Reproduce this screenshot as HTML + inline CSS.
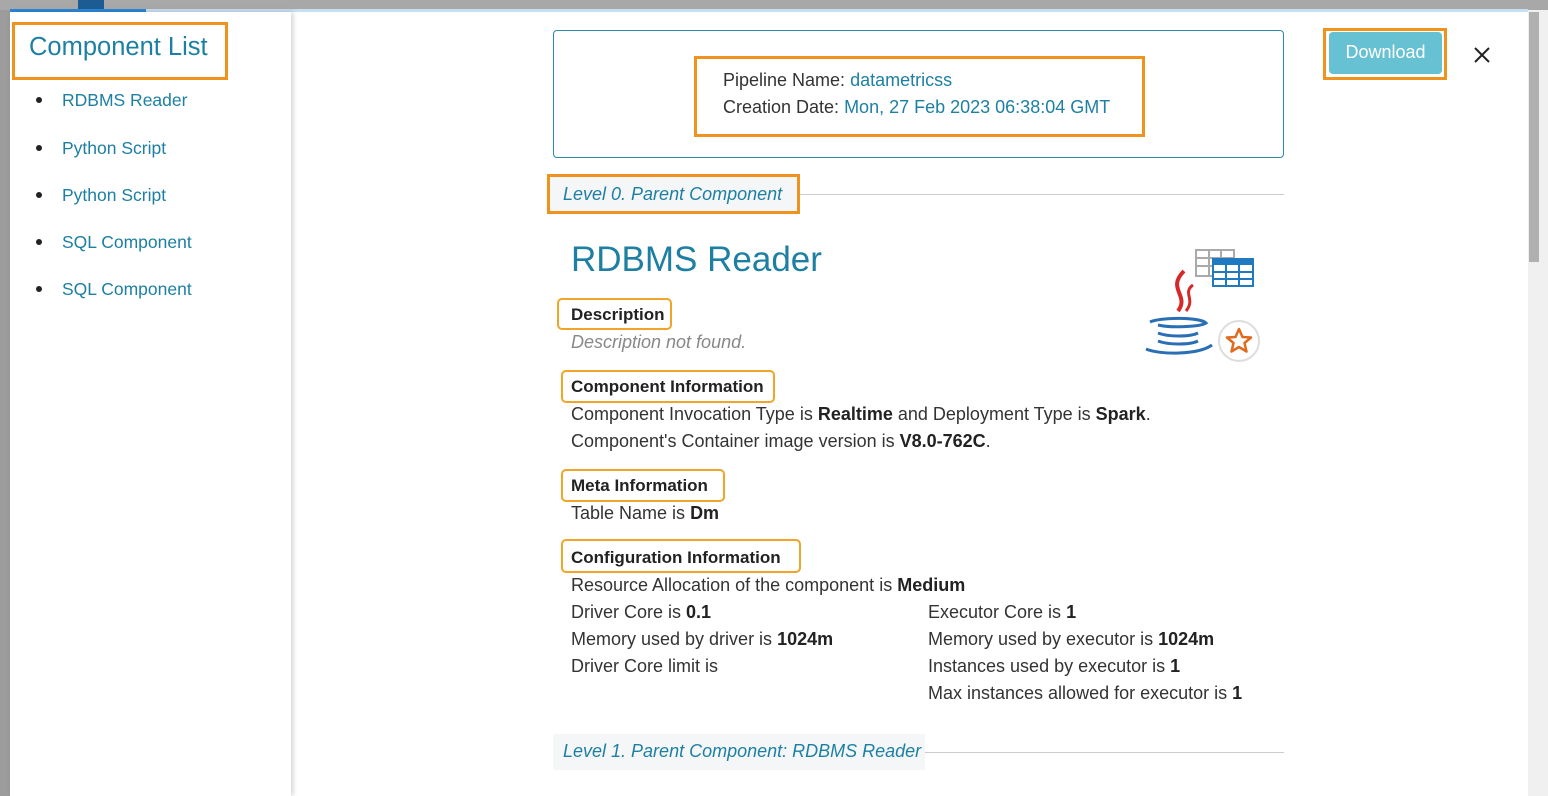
<!DOCTYPE html>
<html><head><meta charset="utf-8"><style>
*{margin:0;padding:0;box-sizing:border-box}
body{width:1548px;height:796px;overflow:hidden;background:#9c9c9c;font-family:"Liberation Sans",sans-serif;color:#333;position:relative}
.a{position:absolute;white-space:nowrap}
.t{color:#1d80a3}
.ob{position:absolute;border:3px solid #f0921e}
.yb{position:absolute;border:2px solid #f0a52a;border-radius:5px}
.l{font-size:18px;line-height:20px}
.s{font-size:17.5px;line-height:20px}
b{font-weight:bold;color:#222}
.h{font-size:17px;font-weight:bold;color:#222}
</style></head><body>
<div class="a" style="left:0;top:0;width:1548px;height:10px;background:#a8a8a8"></div>
<div class="a" style="left:78px;top:0;width:26px;height:10px;background:#1d5c93"></div>
<div class="a" style="left:10px;top:9px;width:1518px;height:4px;background:#c7dff3"></div>
<div class="a" style="left:10px;top:9px;width:136px;height:4px;background:#2a88d8"></div>
<div class="a" style="left:10px;top:12px;width:1518px;height:784px;background:#fff"></div>
<div class="a" style="left:10px;top:12px;width:281px;height:784px;background:#fff;box-shadow:2px 0 5px rgba(0,0,0,.18)"></div>
<div class="a" style="left:1528px;top:10px;width:20px;height:786px;background:#f0f0f0"></div>
<div class="a" style="left:1529px;top:12px;width:10px;height:250px;background:#b0b0b0"></div>

<div class="ob" style="left:12px;top:22px;width:216px;height:58px"></div>
<div class="a t" style="left:29px;top:33px;font-size:25.5px">Component List</div>
<div class="a t s" style="left:62px;top:90px">RDBMS Reader</div>
<div class="a t s" style="left:62px;top:138px">Python Script</div>
<div class="a t s" style="left:62px;top:185px">Python Script</div>
<div class="a t s" style="left:62px;top:232px">SQL Component</div>
<div class="a t s" style="left:62px;top:279px">SQL Component</div>
<div class="a" style="left:36px;top:97px;width:6px;height:6px;border-radius:3px;background:#222"></div>
<div class="a" style="left:36px;top:145px;width:6px;height:6px;border-radius:3px;background:#222"></div>
<div class="a" style="left:36px;top:192px;width:6px;height:6px;border-radius:3px;background:#222"></div>
<div class="a" style="left:36px;top:239px;width:6px;height:6px;border-radius:3px;background:#222"></div>
<div class="a" style="left:36px;top:286px;width:6px;height:6px;border-radius:3px;background:#222"></div>

<div class="a" style="left:553px;top:30px;width:731px;height:128px;border:1px solid #2a8aa8;border-radius:4px"></div>
<div class="ob" style="left:694px;top:56px;width:451px;height:81px"></div>
<div class="a l" style="left:723px;top:70px">Pipeline Name: <span class="t">datametricss</span></div>
<div class="a l" style="left:723px;top:97px">Creation Date: <span class="t">Mon, 27 Feb 2023 06:38:04 GMT</span></div>

<div class="ob" style="left:1323px;top:28px;width:124px;height:52px"></div>
<div class="a" style="left:1329px;top:32px;width:113px;height:42px;background:#66c1d2;border-radius:4px;color:#fff;font-size:18px;text-align:center;line-height:40px">Download</div>
<svg class="a" style="left:1473px;top:46px" width="18" height="18" viewBox="0 0 18 18"><path d="M2 2L16 16M16 2L2 16" stroke="#222" stroke-width="2"/></svg>

<div class="a" style="left:550px;top:177px;width:248px;height:34px;background:#f5f6f7"></div>
<div class="ob" style="left:547px;top:174px;width:253px;height:40px"></div>
<div class="a t l" style="left:563px;top:184px;font-style:italic">Level 0. Parent Component</div>
<div class="a" style="left:800px;top:194px;width:484px;height:1px;background:#ccc"></div>

<div class="a t" style="left:571px;top:240px;font-size:35px">RDBMS Reader</div>

<svg class="a" style="left:1140px;top:245px" width="125" height="120" viewBox="0 0 125 120">
<rect x="56" y="5" width="38" height="26" fill="none" stroke="#aaa" stroke-width="2"/>
<path d="M56 13H94M56 21H94M69 5V31M81 5V31" stroke="#aaa" stroke-width="2"/>
<rect x="73" y="14" width="40" height="27" fill="#fff" stroke="#1f7ac2" stroke-width="2"/>
<rect x="73" y="14" width="40" height="6" fill="#1f7ac2"/>
<path d="M73 27H113M73 34H113M86 14V41M99 14V41" stroke="#1f7ac2" stroke-width="2"/>
<path d="M44 26C26 44 50 50 38 66" stroke="#d42a2a" stroke-width="4" fill="none"/>
<path d="M53 40C42 48 56 54 46 66" stroke="#d42a2a" stroke-width="3" fill="none"/>
<path d="M10 77C20 72 60 72 66 78C60 82 30 83 18 80" stroke="#2a6fb5" stroke-width="3" fill="none"/>
<path d="M18 88C28 92 50 92 58 88" stroke="#2a6fb5" stroke-width="3" fill="none"/>
<path d="M18 96C28 100 50 100 58 96" stroke="#2a6fb5" stroke-width="3" fill="none"/>
<path d="M6 104C20 110 58 110 72 100" stroke="#2a6fb5" stroke-width="3" fill="none"/>
<circle cx="99" cy="96" r="20" fill="#fff" stroke="#ddd" stroke-width="2"/>
<path d="M99 84L102.5 92L111 92.5L104.5 98L106.5 106.5L99 102L91.5 106.5L93.5 98L87 92.5L95.5 92Z" fill="none" stroke="#e06a1e" stroke-width="2.5" stroke-linejoin="round"/>
</svg>

<div class="yb" style="left:557px;top:298px;width:115px;height:32px"></div>
<div class="a h" style="left:571px;top:305px">Description</div>
<div class="a l" style="left:571px;top:332px;font-style:italic;color:#888">Description not found.</div>

<div class="yb" style="left:561px;top:370px;width:214px;height:33px"></div>
<div class="a h" style="left:571px;top:377px">Component Information</div>
<div class="a l" style="left:571px;top:404px">Component Invocation Type is <b>Realtime</b> and Deployment Type is <b>Spark</b>.</div>
<div class="a l" style="left:571px;top:431px">Component's Container image version is <b>V8.0-762C</b>.</div>

<div class="yb" style="left:561px;top:469px;width:164px;height:33px"></div>
<div class="a h" style="left:571px;top:476px">Meta Information</div>
<div class="a l" style="left:571px;top:503px">Table Name is <b>Dm</b></div>

<div class="yb" style="left:561px;top:539px;width:240px;height:34px"></div>
<div class="a h" style="left:571px;top:548px">Configuration Information</div>
<div class="a l" style="left:571px;top:575px">Resource Allocation of the component is <b>Medium</b></div>
<div class="a l" style="left:571px;top:602px">Driver Core is <b>0.1</b></div>
<div class="a l" style="left:571px;top:629px">Memory used by driver is <b>1024m</b></div>
<div class="a l" style="left:571px;top:656px">Driver Core limit is</div>
<div class="a l" style="left:928px;top:602px">Executor Core is <b>1</b></div>
<div class="a l" style="left:928px;top:629px">Memory used by executor is <b>1024m</b></div>
<div class="a l" style="left:928px;top:656px">Instances used by executor is <b>1</b></div>
<div class="a l" style="left:928px;top:683px">Max instances allowed for executor is <b>1</b></div>

<div class="a" style="left:553px;top:734px;width:372px;height:36px;background:#f5f6f7"></div>
<div class="a t l" style="left:563px;top:741px;font-style:italic">Level 1. Parent Component: RDBMS Reader</div>
<div class="a" style="left:925px;top:752px;width:359px;height:1px;background:#ccc"></div>
</body></html>
